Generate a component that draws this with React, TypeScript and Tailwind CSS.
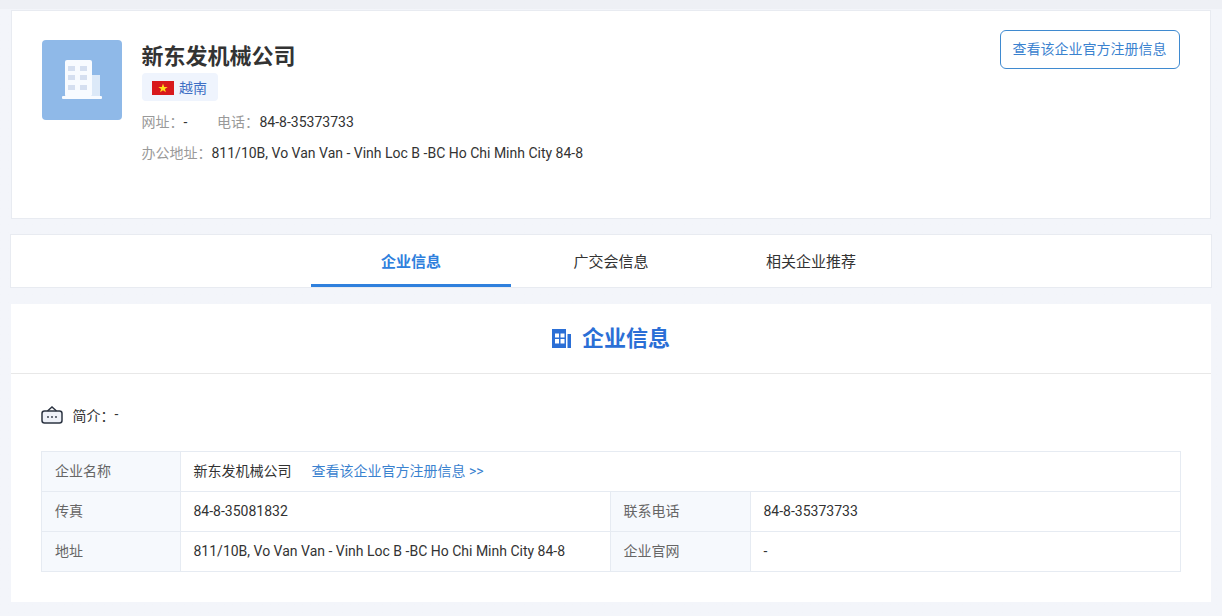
const labelCell = 'bg-[#f6f9fd] px-[13px] text-[#666] border-r border-[#e6ebf2]'
const valueCell = 'pl-[12.5px] pr-[13px] text-[#333]'

function BuildingArt() {
  return (
    <svg width="40" height="40" viewBox="0 0 40 40">
      <rect x="30" y="15" width="8" height="22" fill="#dce9f8" />
      <rect x="3" y="0" width="27" height="37" rx="2" fill="#f8fbff" />
      <rect x="0" y="36" width="40" height="3" rx="1" fill="#f8fbff" />
      {[6, 15, 25].map((y) =>
        [6, 18].map((x) => <rect key={`${x}-${y}`} x={x} y={y} width="7" height="5" fill="#d5dff0" />),
      )}
    </svg>
  )
}

function VietnamFlag() {
  return (
    <svg width="22" height="14" viewBox="0 0 22 14">
      <rect width="22" height="14" fill="#d8191c" />
      <polygon points="11,2.6 12.2,5.9 15.7,5.9 12.9,8 13.9,11.3 11,9.3 8.1,11.3 9.1,8 6.3,5.9 9.8,5.9" fill="#ffe01a" />
    </svg>
  )
}

function HeadingIcon() {
  return (
    <svg width="19" height="19" viewBox="0 0 19 19">
      <path
        fillRule="evenodd"
        d="M0 0h14v19H0zM3 4.500v4h4v-4zM8.500 4.500v4h4v-4zM3 10v4.500h4V10zM8.500 10v4.500h4V10z"
        fill="#2b6fd6"
      />
      <rect x="15.500" y="5" width="3.500" height="14" fill="#2b6fd6" />
    </svg>
  )
}

function IntroIcon() {
  return (
    <svg className="mt-px" width="22" height="18" viewBox="0 0 22 18" fill="none">
      <rect x="1" y="5" width="20" height="12" rx="2.500" fill="#eef1f8" stroke="#2c3442" strokeWidth="1.500" />
      <path d="M6.500 5 11 1l4.500 4" stroke="#2c3442" strokeWidth="1.500" />
      <circle cx="7" cy="11" r="0.900" fill="#2c3442" />
      <circle cx="11" cy="11" r="0.900" fill="#2c3442" />
      <circle cx="15" cy="11" r="0.900" fill="#2c3442" />
    </svg>
  )
}

export default function App() {
  return (
    <div
      className="h-[616px] overflow-hidden bg-gradient-to-b from-[#eef0f5] from-[9px] to-[#f3f5fa] to-[9px] pt-[10px] text-sm text-[#333]"
      style={{ fontFamily: 'Roboto, "Noto Sans CJK SC", sans-serif' }}
    >
      <div className="mx-[11px] flex h-[209px] items-start border border-[#e8ebf1] bg-white pl-[30px] pr-[30px] pt-[29px]">
        <div className="flex h-20 w-20 shrink-0 items-center justify-center rounded bg-[#8fb9e8]">
          <BuildingArt />
        </div>
        <div className="ml-[19.5px] flex-1">
          <h1 className="h-[33px] text-[22px] font-bold leading-[33px] text-[#333]">新东发机械公司</h1>
          <div className="ml-[0.5px] flex h-7 w-[76px] items-center gap-[5px] rounded-sm bg-[#eff4fd] pl-[10px] pt-[2px] text-[#3e6fc4]">
            <VietnamFlag />
            <span>越南</span>
          </div>
          <div className="mt-[11px] flex leading-[20px]">
            <span className="w-[75.5px]"><span className="text-[#999]">网址：</span>-</span>
            <span><span className="text-[#999]">电话：</span><span className="ml-[0.5px]">84-8-35373733</span></span>
          </div>
          <div className="mt-[11px] leading-[20px]">
            <span className="text-[#999]">办公地址：</span>811/10B, Vo Van Van - Vinh Loc B -BC Ho Chi Minh City 84-8
          </div>
        </div>
        <button className="-mt-[10px] h-[39px] w-[180px] rounded-md border border-[#3f8ad0] pb-[2px] pr-[1px] text-sm text-[#3a82cf]">
          查看该企业官方注册信息
        </button>
      </div>

      <div className="mx-[10px] mt-[15px] flex h-[54px] justify-center border border-[#e8ebf1] bg-white text-[15px]">
        <div className="flex h-full w-[200px] items-center justify-center border-b-[3px] border-[#2f80dd] pt-[6px] font-bold text-[#2f80dd]">
          企业信息
        </div>
        <div className="flex h-full w-[200px] items-center justify-center border-b-[3px] border-transparent pt-[6px] text-[#333]">广交会信息</div>
        <div className="flex h-full w-[200px] items-center justify-center border-b-[3px] border-transparent pt-[6px] text-[#333]">相关企业推荐</div>
      </div>

      <div className="mx-[11px] mt-4 h-[298px] bg-white">
        <div className="flex h-[70px] items-center justify-center gap-[11px] border-b border-[#e8e8e8]">
          <HeadingIcon />
          <h2 className="text-[22px] font-bold text-[#2b6fd6]">企业信息</h2>
        </div>
        <div className="px-[30px] pt-[31px]">
          <div className="flex items-start gap-[9.5px] text-[#333]">
            <IntroIcon />
            <span className="leading-[22px]">简介：<span className="relative -top-[2px]">-</span></span>
          </div>
          <div className="mt-[24px] border border-b-0 border-[#e6ebf2] leading-[39px]">
            <div className="flex h-10 border-b border-[#e6ebf2]">
              <div className={`${labelCell} w-[139px]`}>企业名称</div>
              <div className={valueCell}>
                新东发机械公司<span className="ml-5 text-[#3a82cf]">查看该企业官方注册信息 &gt;&gt;</span>
              </div>
            </div>
            <div className="flex h-10 border-b border-[#e6ebf2]">
              <div className={`${labelCell} w-[139px]`}>传真</div>
              <div className={`${valueCell} w-[430px] border-r border-[#e6ebf2]`}>84-8-35081832</div>
              <div className={`${labelCell} w-[140px] !pl-[12.5px]`}>联系电话</div>
              <div className={valueCell}>84-8-35373733</div>
            </div>
            <div className="flex h-10 border-b border-[#e6ebf2]">
              <div className={`${labelCell} w-[139px]`}>地址</div>
              <div className={`${valueCell} w-[430px] border-r border-[#e6ebf2]`}>
                811/10B, Vo Van Van - Vinh Loc B -BC Ho Chi Minh City 84-8
              </div>
              <div className={`${labelCell} w-[140px] !pl-[12.5px]`}>企业官网</div>
              <div className={valueCell}>-</div>
            </div>
          </div>
        </div>
      </div>
    </div>
  )
}
